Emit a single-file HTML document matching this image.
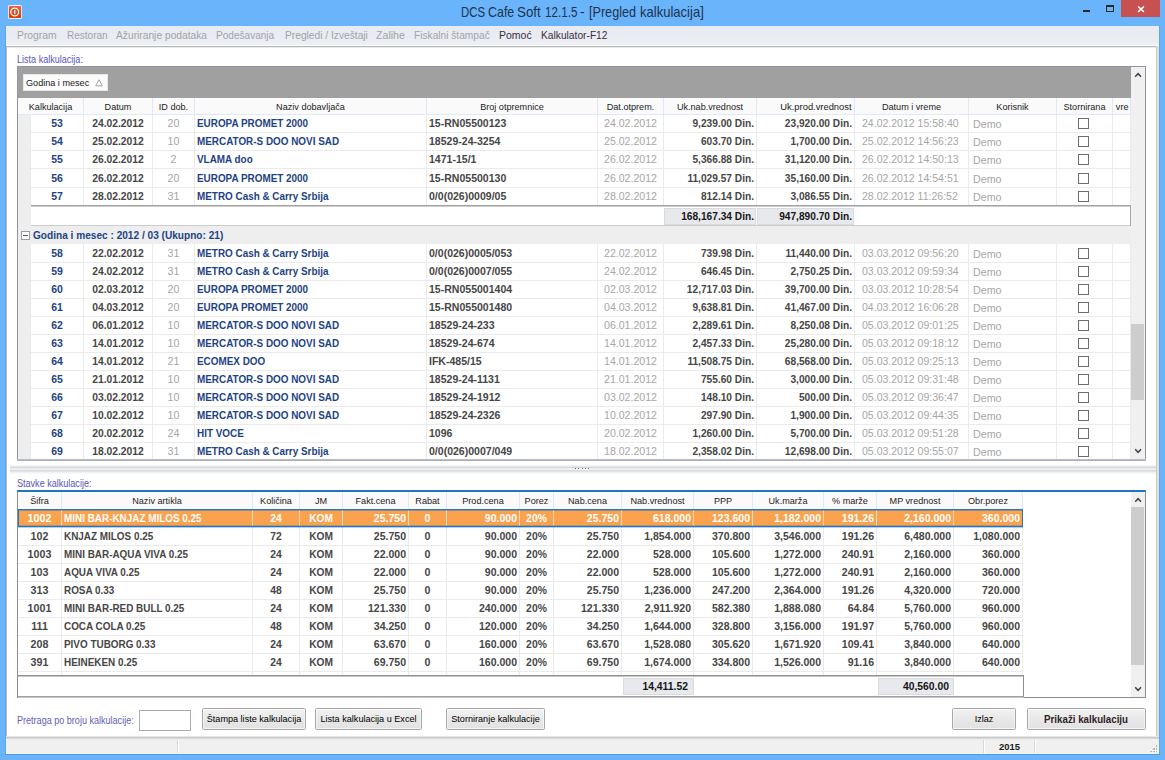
<!DOCTYPE html>
<html><head><meta charset="utf-8"><title>DCS Cafe Soft</title>
<style>
*{margin:0;padding:0;box-sizing:border-box}
html,body{width:1165px;height:760px;overflow:hidden;background:#6ab4fb}
body{font-family:"Liberation Sans",sans-serif;position:relative}
#w{position:absolute;left:0;top:0;width:1165px;height:760px;background:#6ab4fb;overflow:hidden}
.a{position:absolute;white-space:nowrap;overflow:hidden}
.t{position:absolute;white-space:nowrap}
.h{font-size:9.5px;color:#1a1a1a;text-align:center;line-height:16px;height:16px;transform:scaleX(.957)}
.d{font-size:10.7px;font-weight:bold;color:#464646;line-height:19px;height:18px}
.n{color:#1d4384}
.g{font-weight:normal;color:#a6a6a6}
.r{text-align:right}
.c{text-align:center}
.s .d{color:#fff}
.cb{position:absolute;width:11px;height:11px;border:1px solid #6e6e6e;background:#fff}
.btn{position:absolute;height:22px;top:708px;border:1px solid #a6a6a6;border-radius:1.5px;box-shadow:inset 0 0 0 1px rgba(255,255,255,.55);background:linear-gradient(#f2f2f2,#e8e8e8 50%,#e2e2e2);font-size:9.1px;color:#000;text-align:center;line-height:20px;white-space:nowrap}
.m{position:absolute;top:25px;height:19px;line-height:19px;font-size:11.6px;color:#a2a2a6;white-space:nowrap;transform-origin:0 50%}
.m.k{color:#3c2c3c}
</style></head><body>
<div id="w">
<div class="t tw" id="tw0" style="left:460.5px;top:1.5px;font-size:13.9px;line-height:20px;color:#20324c;transform-origin:0 50%;transform:scaleX(0.822)">DCS</div>
<div class="t tw" id="tw1" style="left:487.8px;top:1.5px;font-size:13.9px;line-height:20px;color:#20324c;transform-origin:0 50%;transform:scaleX(0.896)">Cafe</div>
<div class="t tw" id="tw2" style="left:517.2px;top:1.5px;font-size:13.9px;line-height:20px;color:#20324c;transform-origin:0 50%;transform:scaleX(0.959)">Soft</div>
<div class="t tw" id="tw3" style="left:544.7px;top:1.5px;font-size:13.9px;line-height:20px;color:#20324c;transform-origin:0 50%;transform:scaleX(0.841)">12.1.5</div>
<div class="t tw" id="tw4" style="left:580.3px;top:1.5px;font-size:13.9px;line-height:20px;color:#20324c;transform-origin:0 50%;transform:scaleX(1.013)">-</div>
<div class="t tw" id="tw5" style="left:588.9px;top:1.5px;font-size:13.9px;line-height:20px;color:#20324c;transform-origin:0 50%;transform:scaleX(0.908)">[Pregled</div>
<div class="t tw" id="tw6" style="left:639.5px;top:1.5px;font-size:13.9px;line-height:20px;color:#20324c;transform-origin:0 50%;transform:scaleX(0.939)">kalkulacija]</div>
<svg class="a" style="left:8px;top:5px" width="14" height="14" viewBox="0 0 14 14"><defs><linearGradient id="ig" x1="0" y1="0" x2="0" y2="1"><stop offset="0" stop-color="#e9623c"/><stop offset="1" stop-color="#d83a0a"/></linearGradient></defs><rect x="0" y="0" width="14" height="14" rx="1.6" fill="#e6f2fb"/><rect x="0.9" y="0.9" width="12.2" height="12.2" rx="1.2" fill="url(#ig)"/><circle cx="6.7" cy="7" r="3.9" fill="none" stroke="#fff" stroke-width="1.15"/><rect x="6.05" y="5" width="1.3" height="4" rx="0.5" fill="#fff"/></svg>
<div class="a" style="left:1121px;top:0px;width:39px;height:17px;background:#c75050"></div>
<svg class="a" style="left:1134px;top:4px" width="14" height="10" viewBox="0 0 14 10"><path d="M4.1 2.5 L9.9 7.9 M9.9 2.5 L4.1 7.9" stroke="#fff" stroke-width="1.55" fill="none"/></svg>
<div class="a" style="left:1105.8px;top:5px;width:8.3px;height:7px;border:1px solid #262626;border-top-width:2px;background:transparent"></div>
<div class="a" style="left:1083px;top:10px;width:7px;height:2px;background:#262626"></div>
<div class="a" style="left:6px;top:26px;width:1153px;height:20px;background:linear-gradient(#e8ecf2,#e9edf3 60%,#eef1f5)"></div>
<div class="a" style="left:6px;top:45px;width:1153px;height:1px;background:#fafbfc"></div>
<div class="m" id="m0" style="left:16.5px;transform:scaleX(0.891)">Program</div>
<div class="m" id="m1" style="left:66.5px;transform:scaleX(0.863)">Restoran</div>
<div class="m" id="m2" style="left:115.9px;transform:scaleX(0.883)">Ažuriranje podataka</div>
<div class="m" id="m3" style="left:216.3px;transform:scaleX(0.868)">Podešavanja</div>
<div class="m" id="m4" style="left:284.5px;transform:scaleX(0.881)">Pregledi / Izveštaji</div>
<div class="m" id="m5" style="left:376.1px;transform:scaleX(0.915)">Zalihe</div>
<div class="m" id="m6" style="left:414.1px;transform:scaleX(0.877)">Fiskalni štampač</div>
<div class="m k" id="m7" style="left:499.3px;transform:scaleX(0.906)">Pomoć</div>
<div class="m k" id="m8" style="left:540.5px;transform:scaleX(0.882)">Kalkulator-F12</div>
<div class="a" style="left:6px;top:46px;width:1153px;height:693px;background:#fff"></div>
<div class="a" style="left:6px;top:46px;width:1px;height:693px;background:#b4b8bc"></div>
<div class="a" style="left:6px;top:46px;width:1151px;height:1px;background:#b6b6b6"></div>
<div class="a" style="left:7px;top:47px;width:1150px;height:1px;background:#ececec"></div>
<div class="a" style="left:1156px;top:46px;width:1px;height:693px;background:#c8c8c8"></div>
<div class="a" style="left:1157px;top:46px;width:2px;height:693px;background:#e2e2e2"></div>
<div class="a" style="left:6px;top:736px;width:1153px;height:1px;background:#e6e6e6"></div>
<div class="a" style="left:6px;top:737px;width:1153px;height:1px;background:#cbcbcb"></div>
<div class="a" style="left:6px;top:738px;width:1153px;height:1px;background:#d8d8d8"></div>
<div class="a" style="left:6px;top:739px;width:1153px;height:15px;background:#f0f0f0"></div>
<div class="a" style="left:177px;top:740px;width:1px;height:13px;background:#d8d8d8"></div>
<div class="a" style="left:178px;top:740px;width:1px;height:13px;background:#fff"></div>
<div class="a" style="left:983px;top:740px;width:1px;height:13px;background:#d8d8d8"></div>
<div class="a" style="left:984px;top:740px;width:1px;height:13px;background:#fff"></div>
<div class="a" style="left:1034px;top:740px;width:1px;height:13px;background:#d8d8d8"></div>
<div class="a" style="left:1035px;top:740px;width:1px;height:13px;background:#fff"></div>
<div class="t" style="left:985px;top:739px;width:49px;text-align:center;font-size:9.9px;font-weight:bold;line-height:16px;color:#1c1c1c;transform:scaleX(.95)">2015</div>
<div class="a" style="left:1155.2px;top:744.8px;width:1.5px;height:1.5px;background:#fff"></div>
<div class="a" style="left:1155.8000000000002px;top:745.4px;width:1.6px;height:1.6px;background:#b4b4b4"></div>
<div class="a" style="left:1152.5px;top:747.5px;width:1.5px;height:1.5px;background:#fff"></div>
<div class="a" style="left:1153.1000000000001px;top:748.1px;width:1.6px;height:1.6px;background:#b4b4b4"></div>
<div class="a" style="left:1155.2px;top:747.5px;width:1.5px;height:1.5px;background:#fff"></div>
<div class="a" style="left:1155.8000000000002px;top:748.1px;width:1.6px;height:1.6px;background:#b4b4b4"></div>
<div class="a" style="left:1149.8px;top:750.1999999999999px;width:1.5px;height:1.5px;background:#fff"></div>
<div class="a" style="left:1150.4px;top:750.8px;width:1.6px;height:1.6px;background:#b4b4b4"></div>
<div class="a" style="left:1152.5px;top:750.1999999999999px;width:1.5px;height:1.5px;background:#fff"></div>
<div class="a" style="left:1153.1000000000001px;top:750.8px;width:1.6px;height:1.6px;background:#b4b4b4"></div>
<div class="a" style="left:1155.2px;top:750.1999999999999px;width:1.5px;height:1.5px;background:#fff"></div>
<div class="a" style="left:1155.8000000000002px;top:750.8px;width:1.6px;height:1.6px;background:#b4b4b4"></div>
<div class="a" style="left:5px;top:26px;width:1px;height:729px;background:#5ba6f0"></div>
<div class="a" style="left:1159px;top:26px;width:1px;height:729px;background:#5ba6f0"></div>
<div class="a" style="left:5px;top:754px;width:1155px;height:1px;background:#4f9be4"></div>
<div class="a" style="left:6px;top:753px;width:1153px;height:1px;background:#f5f3f1"></div>
<div class="t" style="left:17.4px;top:52.6px;font-size:10px;line-height:14px;color:#5656bc;transform-origin:0 50%;transform:scaleX(.905)">Lista kalkulacija:</div>
<div class="t" style="left:17.4px;top:476.6px;font-size:10px;line-height:14px;color:#5656bc;transform-origin:0 50%;transform:scaleX(.905)">Stavke kalkulacije:</div>
<div class="t" style="left:17.4px;top:713.6px;font-size:10px;line-height:14px;color:#5e5eb8;transform-origin:0 50%;transform:scaleX(.905)">Pretraga po broju kalkulacije:</div>
<div class="a" style="left:17px;top:66px;width:1129px;height:395px;background:#fff;border:1px solid #8e94a0;border-bottom:2px solid #a8acb4"></div>
<div class="a" style="left:18px;top:67px;width:1113px;height:31px;background:#a0a0a0"></div>
<div class="a" style="left:23px;top:74px;width:85px;height:17px;background:#fbfbfb;border:1px solid #e8e8e8"></div>
<div class="t" style="left:26px;top:75px;font-size:9.75px;line-height:16px;color:#1a1a1a;transform-origin:0 50%;transform:scaleX(.933)">Godina i mesec</div>
<svg class="a" style="left:95px;top:79px" width="8" height="8" viewBox="0 0 8 8"><path d="M4 0.8 L7.3 6.8 L0.7 6.8 Z" fill="#fff" stroke="#9a9a9a" stroke-width="0.9"/></svg>
<div class="a" style="left:18px;top:98px;width:1113px;height:16px;background:#fafafa"></div>
<div class="a" style="left:18px;top:114px;width:1113px;height:1px;background:#e0e9f7"></div>
<div class="a h" style="left:18px;top:99px;width:65px">Kalkulacija</div>
<div class="a" style="left:83px;top:98px;width:1px;height:16px;background:#e0e9f7"></div>
<div class="a h" style="left:84px;top:99px;width:68px">Datum</div>
<div class="a" style="left:152px;top:98px;width:1px;height:16px;background:#e0e9f7"></div>
<div class="a h" style="left:153px;top:99px;width:41px">ID dob.</div>
<div class="a" style="left:194px;top:98px;width:1px;height:16px;background:#e0e9f7"></div>
<div class="a h" style="left:195px;top:99px;width:231px">Naziv dobavljača</div>
<div class="a" style="left:426px;top:98px;width:1px;height:16px;background:#e0e9f7"></div>
<div class="a h" style="left:427px;top:99px;width:170px">Broj otpremnice</div>
<div class="a" style="left:597px;top:98px;width:1px;height:16px;background:#e0e9f7"></div>
<div class="a h" style="left:598px;top:99px;width:65px">Dat.otprem.</div>
<div class="a" style="left:663px;top:98px;width:1px;height:16px;background:#e0e9f7"></div>
<div class="a h" style="left:664px;top:99px;width:92px">Uk.nab.vrednost</div>
<div class="a" style="left:756px;top:98px;width:1px;height:16px;background:#e0e9f7"></div>
<div class="a h" style="left:757px;top:99px;width:97px;text-align:right;padding-right:2.5px;font-size:9.6px;transform-origin:100% 50%;transform:scaleX(.975)">Uk.prod.vrednost</div>
<div class="a" style="left:854px;top:98px;width:1px;height:16px;background:#e0e9f7"></div>
<div class="a h" style="left:855px;top:99px;width:113px">Datum i vreme</div>
<div class="a" style="left:968px;top:98px;width:1px;height:16px;background:#e0e9f7"></div>
<div class="a h" style="left:969px;top:99px;width:87px">Korisnik</div>
<div class="a" style="left:1056px;top:98px;width:1px;height:16px;background:#e0e9f7"></div>
<div class="a h" style="left:1057px;top:99px;width:55px">Stornirana</div>
<div class="a" style="left:1112px;top:98px;width:1px;height:16px;background:#e0e9f7"></div>
<div class="a h" style="left:1113px;top:99px;width:17px;text-align:left;padding-left:3px;transform-origin:0 50%">vre</div>
<div class="a" style="left:1130px;top:98px;width:1px;height:16px;background:#e0e9f7"></div>
<div class="a" style="left:18px;top:115px;width:13px;height:90px;background:#eeeeee"></div>
<div class="a" style="left:83px;top:115px;width:1px;height:90px;background:#ebebeb"></div>
<div class="a" style="left:152px;top:115px;width:1px;height:90px;background:#ebebeb"></div>
<div class="a" style="left:194px;top:115px;width:1px;height:90px;background:#ebebeb"></div>
<div class="a" style="left:426px;top:115px;width:1px;height:90px;background:#ebebeb"></div>
<div class="a" style="left:597px;top:115px;width:1px;height:90px;background:#ebebeb"></div>
<div class="a" style="left:663px;top:115px;width:1px;height:90px;background:#ebebeb"></div>
<div class="a" style="left:756px;top:115px;width:1px;height:90px;background:#ebebeb"></div>
<div class="a" style="left:854px;top:115px;width:1px;height:90px;background:#ebebeb"></div>
<div class="a" style="left:968px;top:115px;width:1px;height:90px;background:#ebebeb"></div>
<div class="a" style="left:1056px;top:115px;width:1px;height:90px;background:#ebebeb"></div>
<div class="a" style="left:1112px;top:115px;width:1px;height:90px;background:#ebebeb"></div>
<div class="a" style="left:1130px;top:115px;width:1px;height:90px;background:#ebebeb"></div>
<div class="a" style="left:30px;top:115px;width:1px;height:90px;background:#ebebeb"></div>
<div class="a" style="left:31px;top:132.1px;width:1100px;height:1px;background:#ebebeb"></div>
<div class="a d n c" style="left:31px;top:114.1px;width:52px;transform:scaleX(.98)">53</div>
<div class="a d c" style="left:84px;top:114.1px;width:68px;transform:scaleX(.965)">24.02.2012</div>
<div class="a d g c" style="left:153px;top:114.1px;width:41px">20</div>
<div class="a d n" style="left:197px;top:114.1px;width:245px;transform-origin:0 50%;transform:scaleX(.926)">EUROPA PROMET 2000</div>
<div class="a d" style="left:429px;top:114.1px;width:168px;transform-origin:0 50%;transform:scaleX(.985)">15-RN05500123</div>
<div class="a d g c" style="left:598px;top:114.1px;width:65px;transform:scaleX(.99)">24.02.2012</div>
<div class="a d r" style="left:664px;top:114.1px;width:90px;transform-origin:100% 50%;transform:scaleX(.95)">9,239.00 Din.</div>
<div class="a d r" style="left:757px;top:114.1px;width:95px;transform-origin:100% 50%;transform:scaleX(.95)">23,920.00 Din.</div>
<div class="a d g" style="left:862px;top:114.1px;width:106px;transform-origin:0 50%;transform:scaleX(.985)">24.02.2012 15:58:40</div>
<div class="a d g" style="left:973px;top:115.1px;width:80px">Demo</div>
<div class="cb" style="left:1078px;top:118.1px"></div>
<div class="a" style="left:31px;top:150.25px;width:1100px;height:1px;background:#ebebeb"></div>
<div class="a d n c" style="left:31px;top:132.25px;width:52px;transform:scaleX(.98)">54</div>
<div class="a d c" style="left:84px;top:132.25px;width:68px;transform:scaleX(.965)">25.02.2012</div>
<div class="a d g c" style="left:153px;top:132.25px;width:41px">10</div>
<div class="a d n" style="left:197px;top:132.25px;width:245px;transform-origin:0 50%;transform:scaleX(.926)">MERCATOR-S DOO NOVI SAD</div>
<div class="a d" style="left:429px;top:132.25px;width:168px;transform-origin:0 50%;transform:scaleX(.985)">18529-24-3254</div>
<div class="a d g c" style="left:598px;top:132.25px;width:65px;transform:scaleX(.99)">25.02.2012</div>
<div class="a d r" style="left:664px;top:132.25px;width:90px;transform-origin:100% 50%;transform:scaleX(.95)">603.70 Din.</div>
<div class="a d r" style="left:757px;top:132.25px;width:95px;transform-origin:100% 50%;transform:scaleX(.95)">1,700.00 Din.</div>
<div class="a d g" style="left:862px;top:132.25px;width:106px;transform-origin:0 50%;transform:scaleX(.985)">25.02.2012 14:56:23</div>
<div class="a d g" style="left:973px;top:133.25px;width:80px">Demo</div>
<div class="cb" style="left:1078px;top:136.25px"></div>
<div class="a" style="left:31px;top:168.4px;width:1100px;height:1px;background:#ebebeb"></div>
<div class="a d n c" style="left:31px;top:150.4px;width:52px;transform:scaleX(.98)">55</div>
<div class="a d c" style="left:84px;top:150.4px;width:68px;transform:scaleX(.965)">26.02.2012</div>
<div class="a d g c" style="left:153px;top:150.4px;width:41px">2</div>
<div class="a d n" style="left:197px;top:150.4px;width:245px;transform-origin:0 50%;transform:scaleX(.926)">VLAMA doo</div>
<div class="a d" style="left:429px;top:150.4px;width:168px;transform-origin:0 50%;transform:scaleX(.985)">1471-15/1</div>
<div class="a d g c" style="left:598px;top:150.4px;width:65px;transform:scaleX(.99)">26.02.2012</div>
<div class="a d r" style="left:664px;top:150.4px;width:90px;transform-origin:100% 50%;transform:scaleX(.95)">5,366.88 Din.</div>
<div class="a d r" style="left:757px;top:150.4px;width:95px;transform-origin:100% 50%;transform:scaleX(.95)">31,120.00 Din.</div>
<div class="a d g" style="left:862px;top:150.4px;width:106px;transform-origin:0 50%;transform:scaleX(.985)">26.02.2012 14:50:13</div>
<div class="a d g" style="left:973px;top:151.4px;width:80px">Demo</div>
<div class="cb" style="left:1078px;top:154.4px"></div>
<div class="a" style="left:31px;top:186.55px;width:1100px;height:1px;background:#ebebeb"></div>
<div class="a d n c" style="left:31px;top:168.55px;width:52px;transform:scaleX(.98)">56</div>
<div class="a d c" style="left:84px;top:168.55px;width:68px;transform:scaleX(.965)">26.02.2012</div>
<div class="a d g c" style="left:153px;top:168.55px;width:41px">20</div>
<div class="a d n" style="left:197px;top:168.55px;width:245px;transform-origin:0 50%;transform:scaleX(.926)">EUROPA PROMET 2000</div>
<div class="a d" style="left:429px;top:168.55px;width:168px;transform-origin:0 50%;transform:scaleX(.985)">15-RN05500130</div>
<div class="a d g c" style="left:598px;top:168.55px;width:65px;transform:scaleX(.99)">26.02.2012</div>
<div class="a d r" style="left:664px;top:168.55px;width:90px;transform-origin:100% 50%;transform:scaleX(.95)">11,029.57 Din.</div>
<div class="a d r" style="left:757px;top:168.55px;width:95px;transform-origin:100% 50%;transform:scaleX(.95)">35,160.00 Din.</div>
<div class="a d g" style="left:862px;top:168.55px;width:106px;transform-origin:0 50%;transform:scaleX(.985)">26.02.2012 14:54:51</div>
<div class="a d g" style="left:973px;top:169.55px;width:80px">Demo</div>
<div class="cb" style="left:1078px;top:172.55px"></div>
<div class="a d n c" style="left:31px;top:186.7px;width:52px;transform:scaleX(.98)">57</div>
<div class="a d c" style="left:84px;top:186.7px;width:68px;transform:scaleX(.965)">28.02.2012</div>
<div class="a d g c" style="left:153px;top:186.7px;width:41px">31</div>
<div class="a d n" style="left:197px;top:186.7px;width:245px;transform-origin:0 50%;transform:scaleX(.926)">METRO Cash &amp; Carry Srbija</div>
<div class="a d" style="left:429px;top:186.7px;width:168px;transform-origin:0 50%;transform:scaleX(.985)">0/0(026)0009/05</div>
<div class="a d g c" style="left:598px;top:186.7px;width:65px;transform:scaleX(.99)">28.02.2012</div>
<div class="a d r" style="left:664px;top:186.7px;width:90px;transform-origin:100% 50%;transform:scaleX(.95)">812.14 Din.</div>
<div class="a d r" style="left:757px;top:186.7px;width:95px;transform-origin:100% 50%;transform:scaleX(.95)">3,086.55 Din.</div>
<div class="a d g" style="left:862px;top:186.7px;width:106px;transform-origin:0 50%;transform:scaleX(.985)">28.02.2012 11:26:52</div>
<div class="a d g" style="left:973px;top:187.7px;width:80px">Demo</div>
<div class="cb" style="left:1078px;top:190.7px"></div>
<div class="a" style="left:31px;top:205px;width:1100px;height:21px;background:#fff"></div>
<div class="a" style="left:31px;top:205px;width:1100px;height:1px;background:#a2a2a2"></div>
<div class="a" style="left:31px;top:206px;width:1100px;height:1px;background:#cfcfcf"></div>
<div class="a" style="left:31px;top:225px;width:1100px;height:1px;background:#cdcdcd"></div>
<div class="a" style="left:1130px;top:205px;width:1px;height:21px;background:#a8a8a8"></div>
<div class="a" style="left:18px;top:205px;width:13px;height:21px;background:#eeeeee"></div>
<div class="a" style="left:664px;top:208px;width:92px;height:17px;background:#e7e9ec;border:1px solid #d9dbde"></div>
<div class="a" style="left:757px;top:208px;width:97px;height:17px;background:#e7e9ec;border:1px solid #d9dbde"></div>
<div class="a d r" style="left:664px;top:207px;width:90px;color:#161616;transform-origin:100% 50%;transform:scaleX(.95)">168,167.34 Din.</div>
<div class="a d r" style="left:757px;top:207px;width:95px;color:#161616;transform-origin:100% 50%;transform:scaleX(.95)">947,890.70 Din.</div>
<div class="a" style="left:18px;top:226px;width:1113px;height:18px;background:#eeeeee"></div>
<div class="a" style="left:21px;top:231px;width:9px;height:9px;background:#fff;border:1px solid #9c9ca0"></div>
<div class="a" style="left:23px;top:235px;width:5px;height:1px;background:#4a5a7a"></div>
<div class="a d n" style="left:33px;top:226px;width:400px;transform-origin:0 50%;transform:scaleX(.945)">Godina i mesec : 2012 / 03 (Ukupno: 21)</div>
<div class="a" style="left:18px;top:244px;width:13px;height:216px;background:#eeeeee"></div>
<div class="a" style="left:83px;top:244px;width:1px;height:216px;background:#ebebeb"></div>
<div class="a" style="left:152px;top:244px;width:1px;height:216px;background:#ebebeb"></div>
<div class="a" style="left:194px;top:244px;width:1px;height:216px;background:#ebebeb"></div>
<div class="a" style="left:426px;top:244px;width:1px;height:216px;background:#ebebeb"></div>
<div class="a" style="left:597px;top:244px;width:1px;height:216px;background:#ebebeb"></div>
<div class="a" style="left:663px;top:244px;width:1px;height:216px;background:#ebebeb"></div>
<div class="a" style="left:756px;top:244px;width:1px;height:216px;background:#ebebeb"></div>
<div class="a" style="left:854px;top:244px;width:1px;height:216px;background:#ebebeb"></div>
<div class="a" style="left:968px;top:244px;width:1px;height:216px;background:#ebebeb"></div>
<div class="a" style="left:1056px;top:244px;width:1px;height:216px;background:#ebebeb"></div>
<div class="a" style="left:1112px;top:244px;width:1px;height:216px;background:#ebebeb"></div>
<div class="a" style="left:1130px;top:244px;width:1px;height:216px;background:#ebebeb"></div>
<div class="a" style="left:30px;top:244px;width:1px;height:216px;background:#ebebeb"></div>
<div class="a" style="left:31px;top:262px;width:1100px;height:1px;background:#ebebeb"></div>
<div class="a d n c" style="left:31px;top:244px;width:52px;transform:scaleX(.98)">58</div>
<div class="a d c" style="left:84px;top:244px;width:68px;transform:scaleX(.965)">22.02.2012</div>
<div class="a d g c" style="left:153px;top:244px;width:41px">31</div>
<div class="a d n" style="left:197px;top:244px;width:245px;transform-origin:0 50%;transform:scaleX(.926)">METRO Cash &amp; Carry Srbija</div>
<div class="a d" style="left:429px;top:244px;width:168px;transform-origin:0 50%;transform:scaleX(.985)">0/0(026)0005/053</div>
<div class="a d g c" style="left:598px;top:244px;width:65px;transform:scaleX(.99)">22.02.2012</div>
<div class="a d r" style="left:664px;top:244px;width:90px;transform-origin:100% 50%;transform:scaleX(.95)">739.98 Din.</div>
<div class="a d r" style="left:757px;top:244px;width:95px;transform-origin:100% 50%;transform:scaleX(.95)">11,440.00 Din.</div>
<div class="a d g" style="left:862px;top:244px;width:106px;transform-origin:0 50%;transform:scaleX(.985)">03.03.2012 09:56:20</div>
<div class="a d g" style="left:973px;top:245px;width:80px">Demo</div>
<div class="cb" style="left:1078px;top:248px"></div>
<div class="a" style="left:31px;top:280px;width:1100px;height:1px;background:#ebebeb"></div>
<div class="a d n c" style="left:31px;top:262px;width:52px;transform:scaleX(.98)">59</div>
<div class="a d c" style="left:84px;top:262px;width:68px;transform:scaleX(.965)">24.02.2012</div>
<div class="a d g c" style="left:153px;top:262px;width:41px">31</div>
<div class="a d n" style="left:197px;top:262px;width:245px;transform-origin:0 50%;transform:scaleX(.926)">METRO Cash &amp; Carry Srbija</div>
<div class="a d" style="left:429px;top:262px;width:168px;transform-origin:0 50%;transform:scaleX(.985)">0/0(026)0007/055</div>
<div class="a d g c" style="left:598px;top:262px;width:65px;transform:scaleX(.99)">24.02.2012</div>
<div class="a d r" style="left:664px;top:262px;width:90px;transform-origin:100% 50%;transform:scaleX(.95)">646.45 Din.</div>
<div class="a d r" style="left:757px;top:262px;width:95px;transform-origin:100% 50%;transform:scaleX(.95)">2,750.25 Din.</div>
<div class="a d g" style="left:862px;top:262px;width:106px;transform-origin:0 50%;transform:scaleX(.985)">03.03.2012 09:59:34</div>
<div class="a d g" style="left:973px;top:263px;width:80px">Demo</div>
<div class="cb" style="left:1078px;top:266px"></div>
<div class="a" style="left:31px;top:298px;width:1100px;height:1px;background:#ebebeb"></div>
<div class="a d n c" style="left:31px;top:280px;width:52px;transform:scaleX(.98)">60</div>
<div class="a d c" style="left:84px;top:280px;width:68px;transform:scaleX(.965)">02.03.2012</div>
<div class="a d g c" style="left:153px;top:280px;width:41px">20</div>
<div class="a d n" style="left:197px;top:280px;width:245px;transform-origin:0 50%;transform:scaleX(.926)">EUROPA PROMET 2000</div>
<div class="a d" style="left:429px;top:280px;width:168px;transform-origin:0 50%;transform:scaleX(.985)">15-RN055001404</div>
<div class="a d g c" style="left:598px;top:280px;width:65px;transform:scaleX(.99)">02.03.2012</div>
<div class="a d r" style="left:664px;top:280px;width:90px;transform-origin:100% 50%;transform:scaleX(.95)">12,717.03 Din.</div>
<div class="a d r" style="left:757px;top:280px;width:95px;transform-origin:100% 50%;transform:scaleX(.95)">39,700.00 Din.</div>
<div class="a d g" style="left:862px;top:280px;width:106px;transform-origin:0 50%;transform:scaleX(.985)">03.03.2012 10:28:54</div>
<div class="a d g" style="left:973px;top:281px;width:80px">Demo</div>
<div class="cb" style="left:1078px;top:284px"></div>
<div class="a" style="left:31px;top:316px;width:1100px;height:1px;background:#ebebeb"></div>
<div class="a d n c" style="left:31px;top:298px;width:52px;transform:scaleX(.98)">61</div>
<div class="a d c" style="left:84px;top:298px;width:68px;transform:scaleX(.965)">04.03.2012</div>
<div class="a d g c" style="left:153px;top:298px;width:41px">20</div>
<div class="a d n" style="left:197px;top:298px;width:245px;transform-origin:0 50%;transform:scaleX(.926)">EUROPA PROMET 2000</div>
<div class="a d" style="left:429px;top:298px;width:168px;transform-origin:0 50%;transform:scaleX(.985)">15-RN055001480</div>
<div class="a d g c" style="left:598px;top:298px;width:65px;transform:scaleX(.99)">04.03.2012</div>
<div class="a d r" style="left:664px;top:298px;width:90px;transform-origin:100% 50%;transform:scaleX(.95)">9,638.81 Din.</div>
<div class="a d r" style="left:757px;top:298px;width:95px;transform-origin:100% 50%;transform:scaleX(.95)">41,467.00 Din.</div>
<div class="a d g" style="left:862px;top:298px;width:106px;transform-origin:0 50%;transform:scaleX(.985)">04.03.2012 16:06:28</div>
<div class="a d g" style="left:973px;top:299px;width:80px">Demo</div>
<div class="cb" style="left:1078px;top:302px"></div>
<div class="a" style="left:31px;top:334px;width:1100px;height:1px;background:#ebebeb"></div>
<div class="a d n c" style="left:31px;top:316px;width:52px;transform:scaleX(.98)">62</div>
<div class="a d c" style="left:84px;top:316px;width:68px;transform:scaleX(.965)">06.01.2012</div>
<div class="a d g c" style="left:153px;top:316px;width:41px">10</div>
<div class="a d n" style="left:197px;top:316px;width:245px;transform-origin:0 50%;transform:scaleX(.926)">MERCATOR-S DOO NOVI SAD</div>
<div class="a d" style="left:429px;top:316px;width:168px;transform-origin:0 50%;transform:scaleX(.985)">18529-24-233</div>
<div class="a d g c" style="left:598px;top:316px;width:65px;transform:scaleX(.99)">06.01.2012</div>
<div class="a d r" style="left:664px;top:316px;width:90px;transform-origin:100% 50%;transform:scaleX(.95)">2,289.61 Din.</div>
<div class="a d r" style="left:757px;top:316px;width:95px;transform-origin:100% 50%;transform:scaleX(.95)">8,250.08 Din.</div>
<div class="a d g" style="left:862px;top:316px;width:106px;transform-origin:0 50%;transform:scaleX(.985)">05.03.2012 09:01:25</div>
<div class="a d g" style="left:973px;top:317px;width:80px">Demo</div>
<div class="cb" style="left:1078px;top:320px"></div>
<div class="a" style="left:31px;top:352px;width:1100px;height:1px;background:#ebebeb"></div>
<div class="a d n c" style="left:31px;top:334px;width:52px;transform:scaleX(.98)">63</div>
<div class="a d c" style="left:84px;top:334px;width:68px;transform:scaleX(.965)">14.01.2012</div>
<div class="a d g c" style="left:153px;top:334px;width:41px">10</div>
<div class="a d n" style="left:197px;top:334px;width:245px;transform-origin:0 50%;transform:scaleX(.926)">MERCATOR-S DOO NOVI SAD</div>
<div class="a d" style="left:429px;top:334px;width:168px;transform-origin:0 50%;transform:scaleX(.985)">18529-24-674</div>
<div class="a d g c" style="left:598px;top:334px;width:65px;transform:scaleX(.99)">14.01.2012</div>
<div class="a d r" style="left:664px;top:334px;width:90px;transform-origin:100% 50%;transform:scaleX(.95)">2,457.33 Din.</div>
<div class="a d r" style="left:757px;top:334px;width:95px;transform-origin:100% 50%;transform:scaleX(.95)">25,280.00 Din.</div>
<div class="a d g" style="left:862px;top:334px;width:106px;transform-origin:0 50%;transform:scaleX(.985)">05.03.2012 09:18:12</div>
<div class="a d g" style="left:973px;top:335px;width:80px">Demo</div>
<div class="cb" style="left:1078px;top:338px"></div>
<div class="a" style="left:31px;top:370px;width:1100px;height:1px;background:#ebebeb"></div>
<div class="a d n c" style="left:31px;top:352px;width:52px;transform:scaleX(.98)">64</div>
<div class="a d c" style="left:84px;top:352px;width:68px;transform:scaleX(.965)">14.01.2012</div>
<div class="a d g c" style="left:153px;top:352px;width:41px">21</div>
<div class="a d n" style="left:197px;top:352px;width:245px;transform-origin:0 50%;transform:scaleX(.926)">ECOMEX DOO</div>
<div class="a d" style="left:429px;top:352px;width:168px;transform-origin:0 50%;transform:scaleX(.985)">IFK-485/15</div>
<div class="a d g c" style="left:598px;top:352px;width:65px;transform:scaleX(.99)">14.01.2012</div>
<div class="a d r" style="left:664px;top:352px;width:90px;transform-origin:100% 50%;transform:scaleX(.95)">11,508.75 Din.</div>
<div class="a d r" style="left:757px;top:352px;width:95px;transform-origin:100% 50%;transform:scaleX(.95)">68,568.00 Din.</div>
<div class="a d g" style="left:862px;top:352px;width:106px;transform-origin:0 50%;transform:scaleX(.985)">05.03.2012 09:25:13</div>
<div class="a d g" style="left:973px;top:353px;width:80px">Demo</div>
<div class="cb" style="left:1078px;top:356px"></div>
<div class="a" style="left:31px;top:388px;width:1100px;height:1px;background:#ebebeb"></div>
<div class="a d n c" style="left:31px;top:370px;width:52px;transform:scaleX(.98)">65</div>
<div class="a d c" style="left:84px;top:370px;width:68px;transform:scaleX(.965)">21.01.2012</div>
<div class="a d g c" style="left:153px;top:370px;width:41px">10</div>
<div class="a d n" style="left:197px;top:370px;width:245px;transform-origin:0 50%;transform:scaleX(.926)">MERCATOR-S DOO NOVI SAD</div>
<div class="a d" style="left:429px;top:370px;width:168px;transform-origin:0 50%;transform:scaleX(.985)">18529-24-1131</div>
<div class="a d g c" style="left:598px;top:370px;width:65px;transform:scaleX(.99)">21.01.2012</div>
<div class="a d r" style="left:664px;top:370px;width:90px;transform-origin:100% 50%;transform:scaleX(.95)">755.60 Din.</div>
<div class="a d r" style="left:757px;top:370px;width:95px;transform-origin:100% 50%;transform:scaleX(.95)">3,000.00 Din.</div>
<div class="a d g" style="left:862px;top:370px;width:106px;transform-origin:0 50%;transform:scaleX(.985)">05.03.2012 09:31:48</div>
<div class="a d g" style="left:973px;top:371px;width:80px">Demo</div>
<div class="cb" style="left:1078px;top:374px"></div>
<div class="a" style="left:31px;top:406px;width:1100px;height:1px;background:#ebebeb"></div>
<div class="a d n c" style="left:31px;top:388px;width:52px;transform:scaleX(.98)">66</div>
<div class="a d c" style="left:84px;top:388px;width:68px;transform:scaleX(.965)">03.02.2012</div>
<div class="a d g c" style="left:153px;top:388px;width:41px">10</div>
<div class="a d n" style="left:197px;top:388px;width:245px;transform-origin:0 50%;transform:scaleX(.926)">MERCATOR-S DOO NOVI SAD</div>
<div class="a d" style="left:429px;top:388px;width:168px;transform-origin:0 50%;transform:scaleX(.985)">18529-24-1912</div>
<div class="a d g c" style="left:598px;top:388px;width:65px;transform:scaleX(.99)">03.02.2012</div>
<div class="a d r" style="left:664px;top:388px;width:90px;transform-origin:100% 50%;transform:scaleX(.95)">148.10 Din.</div>
<div class="a d r" style="left:757px;top:388px;width:95px;transform-origin:100% 50%;transform:scaleX(.95)">500.00 Din.</div>
<div class="a d g" style="left:862px;top:388px;width:106px;transform-origin:0 50%;transform:scaleX(.985)">05.03.2012 09:36:47</div>
<div class="a d g" style="left:973px;top:389px;width:80px">Demo</div>
<div class="cb" style="left:1078px;top:392px"></div>
<div class="a" style="left:31px;top:424px;width:1100px;height:1px;background:#ebebeb"></div>
<div class="a d n c" style="left:31px;top:406px;width:52px;transform:scaleX(.98)">67</div>
<div class="a d c" style="left:84px;top:406px;width:68px;transform:scaleX(.965)">10.02.2012</div>
<div class="a d g c" style="left:153px;top:406px;width:41px">10</div>
<div class="a d n" style="left:197px;top:406px;width:245px;transform-origin:0 50%;transform:scaleX(.926)">MERCATOR-S DOO NOVI SAD</div>
<div class="a d" style="left:429px;top:406px;width:168px;transform-origin:0 50%;transform:scaleX(.985)">18529-24-2326</div>
<div class="a d g c" style="left:598px;top:406px;width:65px;transform:scaleX(.99)">10.02.2012</div>
<div class="a d r" style="left:664px;top:406px;width:90px;transform-origin:100% 50%;transform:scaleX(.95)">297.90 Din.</div>
<div class="a d r" style="left:757px;top:406px;width:95px;transform-origin:100% 50%;transform:scaleX(.95)">1,900.00 Din.</div>
<div class="a d g" style="left:862px;top:406px;width:106px;transform-origin:0 50%;transform:scaleX(.985)">05.03.2012 09:44:35</div>
<div class="a d g" style="left:973px;top:407px;width:80px">Demo</div>
<div class="cb" style="left:1078px;top:410px"></div>
<div class="a" style="left:31px;top:442px;width:1100px;height:1px;background:#ebebeb"></div>
<div class="a d n c" style="left:31px;top:424px;width:52px;transform:scaleX(.98)">68</div>
<div class="a d c" style="left:84px;top:424px;width:68px;transform:scaleX(.965)">20.02.2012</div>
<div class="a d g c" style="left:153px;top:424px;width:41px">24</div>
<div class="a d n" style="left:197px;top:424px;width:245px;transform-origin:0 50%;transform:scaleX(.926)">HIT VOCE</div>
<div class="a d" style="left:429px;top:424px;width:168px;transform-origin:0 50%;transform:scaleX(.985)">1096</div>
<div class="a d g c" style="left:598px;top:424px;width:65px;transform:scaleX(.99)">20.02.2012</div>
<div class="a d r" style="left:664px;top:424px;width:90px;transform-origin:100% 50%;transform:scaleX(.95)">1,260.00 Din.</div>
<div class="a d r" style="left:757px;top:424px;width:95px;transform-origin:100% 50%;transform:scaleX(.95)">5,700.00 Din.</div>
<div class="a d g" style="left:862px;top:424px;width:106px;transform-origin:0 50%;transform:scaleX(.985)">05.03.2012 09:51:28</div>
<div class="a d g" style="left:973px;top:425px;width:80px">Demo</div>
<div class="cb" style="left:1078px;top:428px"></div>
<div class="a" style="left:31px;top:460px;width:1100px;height:1px;background:#ebebeb"></div>
<div class="a d n c" style="left:31px;top:442px;width:52px;transform:scaleX(.98)">69</div>
<div class="a d c" style="left:84px;top:442px;width:68px;transform:scaleX(.965)">18.02.2012</div>
<div class="a d g c" style="left:153px;top:442px;width:41px">31</div>
<div class="a d n" style="left:197px;top:442px;width:245px;transform-origin:0 50%;transform:scaleX(.926)">METRO Cash &amp; Carry Srbija</div>
<div class="a d" style="left:429px;top:442px;width:168px;transform-origin:0 50%;transform:scaleX(.985)">0/0(026)0007/049</div>
<div class="a d g c" style="left:598px;top:442px;width:65px;transform:scaleX(.99)">18.02.2012</div>
<div class="a d r" style="left:664px;top:442px;width:90px;transform-origin:100% 50%;transform:scaleX(.95)">2,358.02 Din.</div>
<div class="a d r" style="left:757px;top:442px;width:95px;transform-origin:100% 50%;transform:scaleX(.95)">12,698.00 Din.</div>
<div class="a d g" style="left:862px;top:442px;width:106px;transform-origin:0 50%;transform:scaleX(.985)">05.03.2012 09:55:07</div>
<div class="a d g" style="left:973px;top:443px;width:80px">Demo</div>
<div class="cb" style="left:1078px;top:446px"></div>
<div class="a" style="left:17px;top:459px;width:1129px;height:1px;background:#b8bcc4"></div>
<div class="a" style="left:17px;top:460px;width:1129px;height:1px;background:#acb0b8"></div>
<div class="a" style="left:1131px;top:67px;width:14px;height:392px;background:#f0f0f0"></div>
<div class="a" style="left:1131px;top:324px;width:13px;height:76px;background:#cdcdcd"></div>
<svg class="a" style="left:1133px;top:71px" width="10" height="8" viewBox="0 0 10 8"><path d="M2.2 5.7 L5.1 2.7 L8.0 5.7" stroke="#404040" stroke-width="1.5" fill="none"/></svg>
<svg class="a" style="left:1133px;top:447px" width="10" height="8" viewBox="0 0 10 8"><path d="M2.2 2.3 L5.1 5.3 L8.0 2.3" stroke="#404040" stroke-width="1.5" fill="none"/></svg>
<div class="a" style="left:10px;top:465px;width:1146px;height:1px;background:#f2f3f4"></div>
<div class="a" style="left:10px;top:466px;width:1146px;height:1px;background:#e6e8ea"></div>
<div class="a" style="left:10px;top:467px;width:1146px;height:1px;background:#d4d7da"></div>
<div class="a" style="left:10px;top:468px;width:1146px;height:1px;background:#eceef0"></div>
<div class="a" style="left:10px;top:469px;width:1146px;height:1px;background:#eef0f2"></div>
<div class="a" style="left:10px;top:470px;width:1146px;height:1px;background:#d8dbde"></div>
<div class="a" style="left:10px;top:471px;width:1146px;height:1px;background:#e2e4e6"></div>
<div class="a" style="left:10px;top:472px;width:1146px;height:1px;background:#f1f2f3"></div>
<div class="a" style="left:10px;top:473px;width:1146px;height:1px;background:#f9f9fa"></div>
<div class="a" style="left:575.7px;top:468.7px;width:1.2px;height:1.4px;background:#fff"></div>
<div class="a" style="left:575.0px;top:468px;width:1.2px;height:1.4px;background:#6a6a6a"></div>
<div class="a" style="left:578.95px;top:468.7px;width:1.2px;height:1.4px;background:#fff"></div>
<div class="a" style="left:578.25px;top:468px;width:1.2px;height:1.4px;background:#6a6a6a"></div>
<div class="a" style="left:582.2px;top:468.7px;width:1.2px;height:1.4px;background:#fff"></div>
<div class="a" style="left:581.5px;top:468px;width:1.2px;height:1.4px;background:#6a6a6a"></div>
<div class="a" style="left:585.45px;top:468.7px;width:1.2px;height:1.4px;background:#fff"></div>
<div class="a" style="left:584.75px;top:468px;width:1.2px;height:1.4px;background:#6a6a6a"></div>
<div class="a" style="left:588.7px;top:468.7px;width:1.2px;height:1.4px;background:#fff"></div>
<div class="a" style="left:588.0px;top:468px;width:1.2px;height:1.4px;background:#6a6a6a"></div>
<div class="a" style="left:17px;top:490px;width:1129px;height:208px;background:#fff;border:1px solid #8c8c8c;border-top:2px solid #1f74c4"></div>
<div class="a" style="left:18px;top:492px;width:1005px;height:17px;background:#fafafa"></div>
<div class="a h" style="left:18px;top:493px;width:43px">Šifra</div>
<div class="a" style="left:61px;top:492px;width:1px;height:17px;background:#e0e9f7"></div>
<div class="a h" style="left:62px;top:493px;width:190px">Naziv artikla</div>
<div class="a" style="left:252px;top:492px;width:1px;height:17px;background:#e0e9f7"></div>
<div class="a h" style="left:253px;top:493px;width:46px">Količina</div>
<div class="a" style="left:299px;top:492px;width:1px;height:17px;background:#e0e9f7"></div>
<div class="a h" style="left:300px;top:493px;width:42px">JM</div>
<div class="a" style="left:342px;top:492px;width:1px;height:17px;background:#e0e9f7"></div>
<div class="a h" style="left:343px;top:493px;width:65px">Fakt.cena</div>
<div class="a" style="left:408px;top:492px;width:1px;height:17px;background:#e0e9f7"></div>
<div class="a h" style="left:409px;top:493px;width:37px">Rabat</div>
<div class="a" style="left:446px;top:492px;width:1px;height:17px;background:#e0e9f7"></div>
<div class="a h" style="left:447px;top:493px;width:72px">Prod.cena</div>
<div class="a" style="left:519px;top:492px;width:1px;height:17px;background:#e0e9f7"></div>
<div class="a h" style="left:520px;top:493px;width:33px">Porez</div>
<div class="a" style="left:553px;top:492px;width:1px;height:17px;background:#e0e9f7"></div>
<div class="a h" style="left:554px;top:493px;width:67px">Nab.cena</div>
<div class="a" style="left:621px;top:492px;width:1px;height:17px;background:#e0e9f7"></div>
<div class="a h" style="left:622px;top:493px;width:71px">Nab.vrednost</div>
<div class="a" style="left:693px;top:492px;width:1px;height:17px;background:#e0e9f7"></div>
<div class="a h" style="left:694px;top:493px;width:58px">PPP</div>
<div class="a" style="left:752px;top:492px;width:1px;height:17px;background:#e0e9f7"></div>
<div class="a h" style="left:753px;top:493px;width:70px">Uk.marža</div>
<div class="a" style="left:823px;top:492px;width:1px;height:17px;background:#e0e9f7"></div>
<div class="a h" style="left:824px;top:493px;width:52px">% marže</div>
<div class="a" style="left:876px;top:492px;width:1px;height:17px;background:#e0e9f7"></div>
<div class="a h" style="left:877px;top:493px;width:76px">MP vrednost</div>
<div class="a" style="left:953px;top:492px;width:1px;height:17px;background:#e0e9f7"></div>
<div class="a h" style="left:954px;top:493px;width:68px">Obr.porez</div>
<div class="a" style="left:1022px;top:492px;width:1px;height:17px;background:#e0e9f7"></div>
<div class="a" style="left:18px;top:509px;width:1005px;height:18px;background:#faa24d"></div>
<div class="a" style="left:61px;top:527px;width:1px;height:148px;background:#ebebeb"></div>
<div class="a" style="left:61px;top:509px;width:1px;height:18px;background:#fddbb8"></div>
<div class="a" style="left:252px;top:527px;width:1px;height:148px;background:#ebebeb"></div>
<div class="a" style="left:252px;top:509px;width:1px;height:18px;background:#fddbb8"></div>
<div class="a" style="left:299px;top:527px;width:1px;height:148px;background:#ebebeb"></div>
<div class="a" style="left:299px;top:509px;width:1px;height:18px;background:#fddbb8"></div>
<div class="a" style="left:342px;top:527px;width:1px;height:148px;background:#ebebeb"></div>
<div class="a" style="left:342px;top:509px;width:1px;height:18px;background:#fddbb8"></div>
<div class="a" style="left:408px;top:527px;width:1px;height:148px;background:#ebebeb"></div>
<div class="a" style="left:408px;top:509px;width:1px;height:18px;background:#fddbb8"></div>
<div class="a" style="left:446px;top:527px;width:1px;height:148px;background:#ebebeb"></div>
<div class="a" style="left:446px;top:509px;width:1px;height:18px;background:#fddbb8"></div>
<div class="a" style="left:519px;top:527px;width:1px;height:148px;background:#ebebeb"></div>
<div class="a" style="left:519px;top:509px;width:1px;height:18px;background:#fddbb8"></div>
<div class="a" style="left:553px;top:527px;width:1px;height:148px;background:#ebebeb"></div>
<div class="a" style="left:553px;top:509px;width:1px;height:18px;background:#fddbb8"></div>
<div class="a" style="left:621px;top:527px;width:1px;height:148px;background:#ebebeb"></div>
<div class="a" style="left:621px;top:509px;width:1px;height:18px;background:#fddbb8"></div>
<div class="a" style="left:693px;top:527px;width:1px;height:148px;background:#ebebeb"></div>
<div class="a" style="left:693px;top:509px;width:1px;height:18px;background:#fddbb8"></div>
<div class="a" style="left:752px;top:527px;width:1px;height:148px;background:#ebebeb"></div>
<div class="a" style="left:752px;top:509px;width:1px;height:18px;background:#fddbb8"></div>
<div class="a" style="left:823px;top:527px;width:1px;height:148px;background:#ebebeb"></div>
<div class="a" style="left:823px;top:509px;width:1px;height:18px;background:#fddbb8"></div>
<div class="a" style="left:876px;top:527px;width:1px;height:148px;background:#ebebeb"></div>
<div class="a" style="left:876px;top:509px;width:1px;height:18px;background:#fddbb8"></div>
<div class="a" style="left:953px;top:527px;width:1px;height:148px;background:#ebebeb"></div>
<div class="a" style="left:953px;top:509px;width:1px;height:18px;background:#fddbb8"></div>
<div class="a" style="left:1022px;top:527px;width:1px;height:148px;background:#ebebeb"></div>
<div class="a" style="left:1022px;top:509px;width:1px;height:18px;background:#fddbb8"></div>
<div class="s">
<div class="a d c" style="left:18px;top:509px;width:43px;transform:scaleX(1.0)">1002</div>
<div class="a d" style="left:64px;top:509px;width:202px;transform-origin:0 50%;transform:scaleX(0.927)">MINI BAR-KNJAZ MILOS 0.25</div>
<div class="a d c" style="left:253px;top:509px;width:46px;transform:scaleX(0.97)">24</div>
<div class="a d c" style="left:300px;top:509px;width:42px;transform:scaleX(0.95)">KOM</div>
<div class="a d r" style="left:343px;top:509px;width:63px;transform-origin:100% 50%;transform:scaleX(0.985)">25.750</div>
<div class="a d c" style="left:409px;top:509px;width:37px;transform:scaleX(1)">0</div>
<div class="a d r" style="left:447px;top:509px;width:70px;transform-origin:100% 50%;transform:scaleX(0.985)">90.000</div>
<div class="a d c" style="left:520px;top:509px;width:33px;transform:scaleX(0.97)">20%</div>
<div class="a d r" style="left:554px;top:509px;width:65px;transform-origin:100% 50%;transform:scaleX(0.985)">25.750</div>
<div class="a d r" style="left:622px;top:509px;width:69px;transform-origin:100% 50%;transform:scaleX(0.985)">618.000</div>
<div class="a d r" style="left:694px;top:509px;width:56px;transform-origin:100% 50%;transform:scaleX(0.985)">123.600</div>
<div class="a d r" style="left:753px;top:509px;width:68px;transform-origin:100% 50%;transform:scaleX(0.985)">1,182.000</div>
<div class="a d r" style="left:824px;top:509px;width:50px;transform-origin:100% 50%;transform:scaleX(0.985)">191.26</div>
<div class="a d r" style="left:877px;top:509px;width:74px;transform-origin:100% 50%;transform:scaleX(0.985)">2,160.000</div>
<div class="a d r" style="left:954px;top:509px;width:66px;transform-origin:100% 50%;transform:scaleX(0.985)">360.000</div>
</div>
<div class="a" style="left:18px;top:545px;width:1005px;height:1px;background:#ebebeb"></div>
<div class="">
<div class="a d c" style="left:18px;top:527px;width:43px;transform:scaleX(1.0)">102</div>
<div class="a d" style="left:64px;top:527px;width:202px;transform-origin:0 50%;transform:scaleX(0.927)">KNJAZ MILOS 0.25</div>
<div class="a d c" style="left:253px;top:527px;width:46px;transform:scaleX(0.97)">72</div>
<div class="a d c" style="left:300px;top:527px;width:42px;transform:scaleX(0.95)">KOM</div>
<div class="a d r" style="left:343px;top:527px;width:63px;transform-origin:100% 50%;transform:scaleX(0.985)">25.750</div>
<div class="a d c" style="left:409px;top:527px;width:37px;transform:scaleX(1)">0</div>
<div class="a d r" style="left:447px;top:527px;width:70px;transform-origin:100% 50%;transform:scaleX(0.985)">90.000</div>
<div class="a d c" style="left:520px;top:527px;width:33px;transform:scaleX(0.97)">20%</div>
<div class="a d r" style="left:554px;top:527px;width:65px;transform-origin:100% 50%;transform:scaleX(0.985)">25.750</div>
<div class="a d r" style="left:622px;top:527px;width:69px;transform-origin:100% 50%;transform:scaleX(0.985)">1,854.000</div>
<div class="a d r" style="left:694px;top:527px;width:56px;transform-origin:100% 50%;transform:scaleX(0.985)">370.800</div>
<div class="a d r" style="left:753px;top:527px;width:68px;transform-origin:100% 50%;transform:scaleX(0.985)">3,546.000</div>
<div class="a d r" style="left:824px;top:527px;width:50px;transform-origin:100% 50%;transform:scaleX(0.985)">191.26</div>
<div class="a d r" style="left:877px;top:527px;width:74px;transform-origin:100% 50%;transform:scaleX(0.985)">6,480.000</div>
<div class="a d r" style="left:954px;top:527px;width:66px;transform-origin:100% 50%;transform:scaleX(0.985)">1,080.000</div>
</div>
<div class="a" style="left:18px;top:563px;width:1005px;height:1px;background:#ebebeb"></div>
<div class="">
<div class="a d c" style="left:18px;top:545px;width:43px;transform:scaleX(1.0)">1003</div>
<div class="a d" style="left:64px;top:545px;width:202px;transform-origin:0 50%;transform:scaleX(0.927)">MINI BAR-AQUA VIVA 0.25</div>
<div class="a d c" style="left:253px;top:545px;width:46px;transform:scaleX(0.97)">24</div>
<div class="a d c" style="left:300px;top:545px;width:42px;transform:scaleX(0.95)">KOM</div>
<div class="a d r" style="left:343px;top:545px;width:63px;transform-origin:100% 50%;transform:scaleX(0.985)">22.000</div>
<div class="a d c" style="left:409px;top:545px;width:37px;transform:scaleX(1)">0</div>
<div class="a d r" style="left:447px;top:545px;width:70px;transform-origin:100% 50%;transform:scaleX(0.985)">90.000</div>
<div class="a d c" style="left:520px;top:545px;width:33px;transform:scaleX(0.97)">20%</div>
<div class="a d r" style="left:554px;top:545px;width:65px;transform-origin:100% 50%;transform:scaleX(0.985)">22.000</div>
<div class="a d r" style="left:622px;top:545px;width:69px;transform-origin:100% 50%;transform:scaleX(0.985)">528.000</div>
<div class="a d r" style="left:694px;top:545px;width:56px;transform-origin:100% 50%;transform:scaleX(0.985)">105.600</div>
<div class="a d r" style="left:753px;top:545px;width:68px;transform-origin:100% 50%;transform:scaleX(0.985)">1,272.000</div>
<div class="a d r" style="left:824px;top:545px;width:50px;transform-origin:100% 50%;transform:scaleX(0.985)">240.91</div>
<div class="a d r" style="left:877px;top:545px;width:74px;transform-origin:100% 50%;transform:scaleX(0.985)">2,160.000</div>
<div class="a d r" style="left:954px;top:545px;width:66px;transform-origin:100% 50%;transform:scaleX(0.985)">360.000</div>
</div>
<div class="a" style="left:18px;top:581px;width:1005px;height:1px;background:#ebebeb"></div>
<div class="">
<div class="a d c" style="left:18px;top:563px;width:43px;transform:scaleX(1.0)">103</div>
<div class="a d" style="left:64px;top:563px;width:202px;transform-origin:0 50%;transform:scaleX(0.927)">AQUA VIVA 0.25</div>
<div class="a d c" style="left:253px;top:563px;width:46px;transform:scaleX(0.97)">24</div>
<div class="a d c" style="left:300px;top:563px;width:42px;transform:scaleX(0.95)">KOM</div>
<div class="a d r" style="left:343px;top:563px;width:63px;transform-origin:100% 50%;transform:scaleX(0.985)">22.000</div>
<div class="a d c" style="left:409px;top:563px;width:37px;transform:scaleX(1)">0</div>
<div class="a d r" style="left:447px;top:563px;width:70px;transform-origin:100% 50%;transform:scaleX(0.985)">90.000</div>
<div class="a d c" style="left:520px;top:563px;width:33px;transform:scaleX(0.97)">20%</div>
<div class="a d r" style="left:554px;top:563px;width:65px;transform-origin:100% 50%;transform:scaleX(0.985)">22.000</div>
<div class="a d r" style="left:622px;top:563px;width:69px;transform-origin:100% 50%;transform:scaleX(0.985)">528.000</div>
<div class="a d r" style="left:694px;top:563px;width:56px;transform-origin:100% 50%;transform:scaleX(0.985)">105.600</div>
<div class="a d r" style="left:753px;top:563px;width:68px;transform-origin:100% 50%;transform:scaleX(0.985)">1,272.000</div>
<div class="a d r" style="left:824px;top:563px;width:50px;transform-origin:100% 50%;transform:scaleX(0.985)">240.91</div>
<div class="a d r" style="left:877px;top:563px;width:74px;transform-origin:100% 50%;transform:scaleX(0.985)">2,160.000</div>
<div class="a d r" style="left:954px;top:563px;width:66px;transform-origin:100% 50%;transform:scaleX(0.985)">360.000</div>
</div>
<div class="a" style="left:18px;top:599px;width:1005px;height:1px;background:#ebebeb"></div>
<div class="">
<div class="a d c" style="left:18px;top:581px;width:43px;transform:scaleX(1.0)">313</div>
<div class="a d" style="left:64px;top:581px;width:202px;transform-origin:0 50%;transform:scaleX(0.927)">ROSA 0.33</div>
<div class="a d c" style="left:253px;top:581px;width:46px;transform:scaleX(0.97)">48</div>
<div class="a d c" style="left:300px;top:581px;width:42px;transform:scaleX(0.95)">KOM</div>
<div class="a d r" style="left:343px;top:581px;width:63px;transform-origin:100% 50%;transform:scaleX(0.985)">25.750</div>
<div class="a d c" style="left:409px;top:581px;width:37px;transform:scaleX(1)">0</div>
<div class="a d r" style="left:447px;top:581px;width:70px;transform-origin:100% 50%;transform:scaleX(0.985)">90.000</div>
<div class="a d c" style="left:520px;top:581px;width:33px;transform:scaleX(0.97)">20%</div>
<div class="a d r" style="left:554px;top:581px;width:65px;transform-origin:100% 50%;transform:scaleX(0.985)">25.750</div>
<div class="a d r" style="left:622px;top:581px;width:69px;transform-origin:100% 50%;transform:scaleX(0.985)">1,236.000</div>
<div class="a d r" style="left:694px;top:581px;width:56px;transform-origin:100% 50%;transform:scaleX(0.985)">247.200</div>
<div class="a d r" style="left:753px;top:581px;width:68px;transform-origin:100% 50%;transform:scaleX(0.985)">2,364.000</div>
<div class="a d r" style="left:824px;top:581px;width:50px;transform-origin:100% 50%;transform:scaleX(0.985)">191.26</div>
<div class="a d r" style="left:877px;top:581px;width:74px;transform-origin:100% 50%;transform:scaleX(0.985)">4,320.000</div>
<div class="a d r" style="left:954px;top:581px;width:66px;transform-origin:100% 50%;transform:scaleX(0.985)">720.000</div>
</div>
<div class="a" style="left:18px;top:617px;width:1005px;height:1px;background:#ebebeb"></div>
<div class="">
<div class="a d c" style="left:18px;top:599px;width:43px;transform:scaleX(1.0)">1001</div>
<div class="a d" style="left:64px;top:599px;width:202px;transform-origin:0 50%;transform:scaleX(0.927)">MINI BAR-RED BULL 0.25</div>
<div class="a d c" style="left:253px;top:599px;width:46px;transform:scaleX(0.97)">24</div>
<div class="a d c" style="left:300px;top:599px;width:42px;transform:scaleX(0.95)">KOM</div>
<div class="a d r" style="left:343px;top:599px;width:63px;transform-origin:100% 50%;transform:scaleX(0.985)">121.330</div>
<div class="a d c" style="left:409px;top:599px;width:37px;transform:scaleX(1)">0</div>
<div class="a d r" style="left:447px;top:599px;width:70px;transform-origin:100% 50%;transform:scaleX(0.985)">240.000</div>
<div class="a d c" style="left:520px;top:599px;width:33px;transform:scaleX(0.97)">20%</div>
<div class="a d r" style="left:554px;top:599px;width:65px;transform-origin:100% 50%;transform:scaleX(0.985)">121.330</div>
<div class="a d r" style="left:622px;top:599px;width:69px;transform-origin:100% 50%;transform:scaleX(0.985)">2,911.920</div>
<div class="a d r" style="left:694px;top:599px;width:56px;transform-origin:100% 50%;transform:scaleX(0.985)">582.380</div>
<div class="a d r" style="left:753px;top:599px;width:68px;transform-origin:100% 50%;transform:scaleX(0.985)">1,888.080</div>
<div class="a d r" style="left:824px;top:599px;width:50px;transform-origin:100% 50%;transform:scaleX(0.985)">64.84</div>
<div class="a d r" style="left:877px;top:599px;width:74px;transform-origin:100% 50%;transform:scaleX(0.985)">5,760.000</div>
<div class="a d r" style="left:954px;top:599px;width:66px;transform-origin:100% 50%;transform:scaleX(0.985)">960.000</div>
</div>
<div class="a" style="left:18px;top:635px;width:1005px;height:1px;background:#ebebeb"></div>
<div class="">
<div class="a d c" style="left:18px;top:617px;width:43px;transform:scaleX(1.0)">111</div>
<div class="a d" style="left:64px;top:617px;width:202px;transform-origin:0 50%;transform:scaleX(0.927)">COCA COLA 0.25</div>
<div class="a d c" style="left:253px;top:617px;width:46px;transform:scaleX(0.97)">48</div>
<div class="a d c" style="left:300px;top:617px;width:42px;transform:scaleX(0.95)">KOM</div>
<div class="a d r" style="left:343px;top:617px;width:63px;transform-origin:100% 50%;transform:scaleX(0.985)">34.250</div>
<div class="a d c" style="left:409px;top:617px;width:37px;transform:scaleX(1)">0</div>
<div class="a d r" style="left:447px;top:617px;width:70px;transform-origin:100% 50%;transform:scaleX(0.985)">120.000</div>
<div class="a d c" style="left:520px;top:617px;width:33px;transform:scaleX(0.97)">20%</div>
<div class="a d r" style="left:554px;top:617px;width:65px;transform-origin:100% 50%;transform:scaleX(0.985)">34.250</div>
<div class="a d r" style="left:622px;top:617px;width:69px;transform-origin:100% 50%;transform:scaleX(0.985)">1,644.000</div>
<div class="a d r" style="left:694px;top:617px;width:56px;transform-origin:100% 50%;transform:scaleX(0.985)">328.800</div>
<div class="a d r" style="left:753px;top:617px;width:68px;transform-origin:100% 50%;transform:scaleX(0.985)">3,156.000</div>
<div class="a d r" style="left:824px;top:617px;width:50px;transform-origin:100% 50%;transform:scaleX(0.985)">191.97</div>
<div class="a d r" style="left:877px;top:617px;width:74px;transform-origin:100% 50%;transform:scaleX(0.985)">5,760.000</div>
<div class="a d r" style="left:954px;top:617px;width:66px;transform-origin:100% 50%;transform:scaleX(0.985)">960.000</div>
</div>
<div class="a" style="left:18px;top:653px;width:1005px;height:1px;background:#ebebeb"></div>
<div class="">
<div class="a d c" style="left:18px;top:635px;width:43px;transform:scaleX(1.0)">208</div>
<div class="a d" style="left:64px;top:635px;width:202px;transform-origin:0 50%;transform:scaleX(0.927)">PIVO TUBORG 0.33</div>
<div class="a d c" style="left:253px;top:635px;width:46px;transform:scaleX(0.97)">24</div>
<div class="a d c" style="left:300px;top:635px;width:42px;transform:scaleX(0.95)">KOM</div>
<div class="a d r" style="left:343px;top:635px;width:63px;transform-origin:100% 50%;transform:scaleX(0.985)">63.670</div>
<div class="a d c" style="left:409px;top:635px;width:37px;transform:scaleX(1)">0</div>
<div class="a d r" style="left:447px;top:635px;width:70px;transform-origin:100% 50%;transform:scaleX(0.985)">160.000</div>
<div class="a d c" style="left:520px;top:635px;width:33px;transform:scaleX(0.97)">20%</div>
<div class="a d r" style="left:554px;top:635px;width:65px;transform-origin:100% 50%;transform:scaleX(0.985)">63.670</div>
<div class="a d r" style="left:622px;top:635px;width:69px;transform-origin:100% 50%;transform:scaleX(0.985)">1,528.080</div>
<div class="a d r" style="left:694px;top:635px;width:56px;transform-origin:100% 50%;transform:scaleX(0.985)">305.620</div>
<div class="a d r" style="left:753px;top:635px;width:68px;transform-origin:100% 50%;transform:scaleX(0.985)">1,671.920</div>
<div class="a d r" style="left:824px;top:635px;width:50px;transform-origin:100% 50%;transform:scaleX(0.985)">109.41</div>
<div class="a d r" style="left:877px;top:635px;width:74px;transform-origin:100% 50%;transform:scaleX(0.985)">3,840.000</div>
<div class="a d r" style="left:954px;top:635px;width:66px;transform-origin:100% 50%;transform:scaleX(0.985)">640.000</div>
</div>
<div class="a" style="left:18px;top:671px;width:1005px;height:1px;background:#ebebeb"></div>
<div class="">
<div class="a d c" style="left:18px;top:653px;width:43px;transform:scaleX(1.0)">391</div>
<div class="a d" style="left:64px;top:653px;width:202px;transform-origin:0 50%;transform:scaleX(0.927)">HEINEKEN 0.25</div>
<div class="a d c" style="left:253px;top:653px;width:46px;transform:scaleX(0.97)">24</div>
<div class="a d c" style="left:300px;top:653px;width:42px;transform:scaleX(0.95)">KOM</div>
<div class="a d r" style="left:343px;top:653px;width:63px;transform-origin:100% 50%;transform:scaleX(0.985)">69.750</div>
<div class="a d c" style="left:409px;top:653px;width:37px;transform:scaleX(1)">0</div>
<div class="a d r" style="left:447px;top:653px;width:70px;transform-origin:100% 50%;transform:scaleX(0.985)">160.000</div>
<div class="a d c" style="left:520px;top:653px;width:33px;transform:scaleX(0.97)">20%</div>
<div class="a d r" style="left:554px;top:653px;width:65px;transform-origin:100% 50%;transform:scaleX(0.985)">69.750</div>
<div class="a d r" style="left:622px;top:653px;width:69px;transform-origin:100% 50%;transform:scaleX(0.985)">1,674.000</div>
<div class="a d r" style="left:694px;top:653px;width:56px;transform-origin:100% 50%;transform:scaleX(0.985)">334.800</div>
<div class="a d r" style="left:753px;top:653px;width:68px;transform-origin:100% 50%;transform:scaleX(0.985)">1,526.000</div>
<div class="a d r" style="left:824px;top:653px;width:50px;transform-origin:100% 50%;transform:scaleX(0.985)">91.16</div>
<div class="a d r" style="left:877px;top:653px;width:74px;transform-origin:100% 50%;transform:scaleX(0.985)">3,840.000</div>
<div class="a d r" style="left:954px;top:653px;width:66px;transform-origin:100% 50%;transform:scaleX(0.985)">640.000</div>
</div>
<div class="a" style="left:18px;top:509px;width:1005px;height:1px;background:#2476c4"></div>
<div class="a" style="left:18px;top:510px;width:1005px;height:1px;background:#2476c4;opacity:.45"></div>
<div class="a" style="left:18px;top:526px;width:1005px;height:1px;background:#2476c4"></div>
<div class="a" style="left:18px;top:525px;width:1005px;height:1px;background:#2476c4;opacity:.35"></div>
<div class="a" style="left:18px;top:527px;width:1005px;height:1px;background:#2476c4;opacity:.35"></div>
<div class="a" style="left:1022px;top:509px;width:1px;height:18px;background:#2476c4"></div>
<div class="a" style="left:18px;top:509px;width:1px;height:18px;background:#2476c4"></div>
<div class="a" style="left:18px;top:675px;width:1006px;height:23px;background:#fff"></div>
<div class="a" style="left:18px;top:675px;width:1006px;height:1px;background:#909090"></div>
<div class="a" style="left:18px;top:676px;width:1006px;height:1px;background:#c6c6c6"></div>
<div class="a" style="left:18px;top:696px;width:1006px;height:1px;background:#a0a0a0"></div>
<div class="a" style="left:18px;top:697px;width:1006px;height:1px;background:#c8c8c8"></div>
<div class="a" style="left:1023px;top:675px;width:1px;height:22px;background:#909090"></div>
<div class="a" style="left:623px;top:678px;width:71px;height:17px;background:#e7e9ec;border:1px solid #d9dbde"></div>
<div class="a" style="left:878px;top:678px;width:76px;height:17px;background:#e7e9ec;border:1px solid #d9dbde"></div>
<div class="a d r" style="left:622px;top:677px;width:66px;color:#161616;transform-origin:100% 50%;transform:scaleX(.97)">14,411.52</div>
<div class="a d r" style="left:877px;top:677px;width:72px;color:#161616;transform-origin:100% 50%;transform:scaleX(.97)">40,560.00</div>
<div class="a" style="left:1131px;top:492px;width:14px;height:205px;background:#f0f0f0"></div>
<div class="a" style="left:1131px;top:507px;width:13px;height:158px;background:#cdcdcd"></div>
<svg class="a" style="left:1133px;top:496px" width="10" height="8" viewBox="0 0 10 8"><path d="M2.2 5.7 L5.1 2.7 L8.0 5.7" stroke="#404040" stroke-width="1.5" fill="none"/></svg>
<svg class="a" style="left:1133px;top:685px" width="10" height="8" viewBox="0 0 10 8"><path d="M2.2 2.3 L5.1 5.3 L8.0 2.3" stroke="#404040" stroke-width="1.5" fill="none"/></svg>
<div class="a" style="left:139px;top:710px;width:52px;height:21px;background:#fff;border:1px solid #ababab"></div>
<div class="btn" style="left:202px;width:104px;">Štampa liste kalkulacija</div>
<div class="btn" style="left:315px;width:107px;">Lista kalkulacija u Excel</div>
<div class="btn" style="left:446px;width:99px;">Storniranje kalkulacije</div>
<div class="btn" style="left:952px;width:64px;">Izlaz</div>
<div class="btn" style="left:1027px;width:119px;font-weight:bold;font-size:10.7px;color:#2e2226;"><span style="display:inline-block;transform:scaleX(.912)">Prikaži kalkulaciju</span></div>
</div>
</body></html>
